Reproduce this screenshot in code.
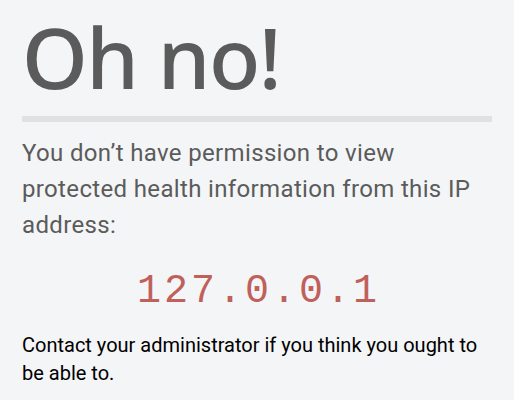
export default function App() {
  return (
    <div className="min-h-screen bg-[#f4f5f7] px-[22px] pt-[7px] font-['Roboto',sans-serif]">
      <h1 className="font-['Noto_Sans',sans-serif] text-[84px] font-medium leading-[100px] tracking-[-1.5px] text-[#5b5b5b]">
        Oh no!
      </h1>
      <div className="mt-[9px] h-[6px] bg-[#e1e1e1]" />
      <p className="mt-[13px] text-[24px] leading-[36px] tracking-[0.35px] text-[#5b5b5b]">
        You don’t have permission to view protected health information from this IP address:
      </p>
      <div className="mt-[25px] pl-[3px] text-center font-['Liberation_Mono',monospace] text-[40px] leading-[48px] tracking-[3px] text-[#c0605b]">
        127.0.0.1
      </div>
      <p className="mt-[15px] text-[20px] leading-[28px] text-black">
        Contact your administrator if you think you ought to be able to.
      </p>
    </div>
  );
}
